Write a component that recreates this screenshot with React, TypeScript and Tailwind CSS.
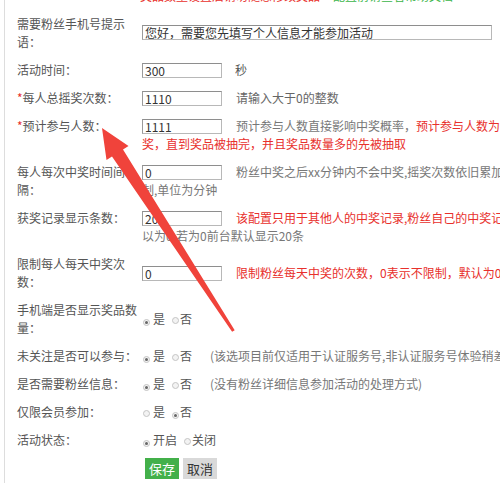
import React from "react"

// Small radio dot as it appears in the old admin form
function Radio({ checked }: { checked?: boolean }) {
  return (
    <span className="inline-flex w-[7px] h-[7px] shrink-0 items-center justify-center rounded-full border border-[#c4c4c4] bg-[#f3f3f3]">
      {checked && <span className="w-[3px] h-[3px] rounded-full bg-[#666]" />}
    </span>
  )
}

function TextInput({ value, width = "w-[80px]" }: { value: string; width?: string }) {
  return (
    <input
      defaultValue={value}
      readOnly
      className={`${width} h-[15px] shrink-0 border border-[#b8b8b8] border-t-[#8e8e8e] border-l-[#9a9a9a] bg-white pl-[2px] text-[12px] leading-[13px] text-[#333] outline-none`}
    />
  )
}

interface RowProps {
  label: React.ReactNode
  top?: boolean
  children: React.ReactNode
}

function Row({ label, top, children }: RowProps) {
  return (
    <div className={`flex py-[5px] ${top ? "items-start" : "items-center"}`}>
      <div className="w-[125px] shrink-0">{label}</div>
      <div className="flex-1 min-w-0">{children}</div>
    </div>
  )
}

function Star() {
  return <span className="text-[#e8302c]">*</span>
}

function YesNo({ yes, a = "是", b = "否" }: { yes: boolean; a?: string; b?: string }) {
  return (
    <div className="flex items-center whitespace-nowrap">
      <span className="ml-[1px]"><Radio checked={yes} /></span>
      <span className="ml-[3px]">{a}</span>
      <span className="ml-[7px]"><Radio checked={!yes} /></span>
      <span className="ml-[1px]">{b}</span>
    </div>
  )
}

export default function App() {
  return (
    <div className="relative w-[500px] h-[483px] overflow-hidden bg-white font-['Noto_Sans_CJK_SC',sans-serif] text-[12px] leading-[18px] text-[#555]">
      <div className="ml-[4px] flex h-[500px] flex-col border-l border-[#dddddd] pl-[12px]">
        {/* cut off line at the top */}
        <div className="-mt-[13px] flex h-[23px] whitespace-nowrap pl-[123px]">
          <span className="text-[#e8302c]">奖品数量设置后请勿随意修改奖品</span>
          <span className="ml-[13px] text-[#3bb54a]">配置前请查看帮助文档</span>
        </div>

        <Row label="需要粉丝手机号提示语：">
          <TextInput value="您好，需要您先填写个人信息才能参加活动" width="w-[350px]" />
        </Row>

        <Row label="活动时间：">
          <div className="flex items-center whitespace-nowrap">
            <TextInput value="300" />
            <span className="ml-[13px]">秒</span>
          </div>
        </Row>

        <Row label={<><Star />每人总摇奖次数：</>}>
          <div className="flex items-center whitespace-nowrap">
            <TextInput value="1110" />
            <span className="ml-[14px] text-[#666]">请输入大于0的整数</span>
          </div>
        </Row>

        <Row top label={<><Star />预计参与人数：</>}>
          <div className="flex h-[18px] items-center whitespace-nowrap">
            <TextInput value="1111" />
            <span className="ml-[14px] text-[#777]">预计参与人数直接影响中奖概率，</span>
            <span className="text-[#e8302c]">预计参与人数为0时不限制中</span>
          </div>
          <div className="whitespace-nowrap text-[#e8302c]">奖，直到奖品被抽完，并且奖品数量多的先被抽取</div>
        </Row>

        <Row top label="每人每次中奖时间间隔：">
          <div className="flex h-[18px] items-center whitespace-nowrap">
            <TextInput value="0" />
            <span className="ml-[14px] text-[#777]">粉丝中奖之后xx分钟内不会中奖,摇奖次数依旧累加,不受限</span>
          </div>
          <div className="whitespace-nowrap text-[#777]">制,单位为分钟</div>
        </Row>

        <Row top label="获奖记录显示条数：">
          <div className="flex h-[18px] items-center whitespace-nowrap">
            <TextInput value="20" />
            <span className="ml-[14px] text-[#e8302c]">该配置只用于其他人的中奖记录,粉丝自己的中奖记录全部显示,可</span>
          </div>
          <div className="whitespace-nowrap text-[#777]">以为0,若为0前台默认显示20条</div>
        </Row>

        <Row label="限制每人每天中奖次数：">
          <div className="flex items-center whitespace-nowrap">
            <TextInput value="0" />
            <span className="ml-[14px] text-[#e8302c]">限制粉丝每天中奖的次数，0表示不限制，默认为0</span>
          </div>
        </Row>

        <Row label="手机端是否显示奖品数量：">
          <YesNo yes />
        </Row>

        <Row label="未关注是否可以参与：">
          <div className="flex items-center whitespace-nowrap">
            <YesNo yes />
            <span className="ml-[18px] text-[#777]">(该选项目前仅适用于认证服务号,非认证服务号体验稍差)</span>
          </div>
        </Row>

        <Row label="是否需要粉丝信息：">
          <div className="flex items-center whitespace-nowrap">
            <YesNo yes />
            <span className="ml-[18px] text-[#777]">(没有粉丝详细信息参加活动的处理方式)</span>
          </div>
        </Row>

        <Row label="仅限会员参加：">
          <YesNo yes={false} />
        </Row>

        <Row label="活动状态：">
          <YesNo yes a="开启" b="关闭" />
        </Row>

        <div className="flex gap-[4px] pl-[128px] pt-[4px]">
          <button className="h-[21px] bg-[#43b04a] px-[4px] text-[13px] leading-[21px] text-white">保存</button>
          <button className="h-[21px] bg-[#d9d9d9] px-[4px] text-[13px] leading-[21px] text-[#333]">取消</button>
        </div>
      </div>

      {/* red annotation arrow */}
      <svg className="pointer-events-none absolute left-0 top-0" width="500" height="483" viewBox="0 0 500 483">
        <polygon
          points="102,128 128.5,146 123,149.5 234.7,330.2 232.1,331.8 112,156.5 106.5,160"
          fill="#f0433b"
        />
      </svg>
    </div>
  )
}
